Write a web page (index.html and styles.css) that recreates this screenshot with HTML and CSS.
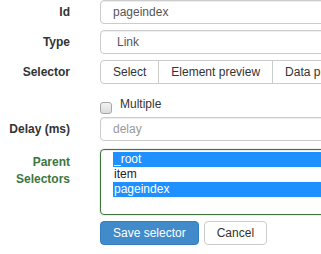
FILE: index.html
```html
<!DOCTYPE html>
<html>
<head>
    <meta name="viewport" content="width=device-width, initial-scale=1">
    <link rel="stylesheet" href="styles.css">
</head>
<body>
    <form class="selector-form">
        <div class="form-row">
            <label class="form-label" for="selectorId">Id</label>
            <input class="form-control" id="selectorId" type="text" value="pageindex">
        </div>
        <div class="form-row">
            <label class="form-label" for="selectorType">Type</label>
            <select class="form-control select-control" id="selectorType">
                <option>Link</option>
            </select>
        </div>
        <div class="form-row">
            <label class="form-label">Selector</label>
            <div class="btn-group">
                <button type="button" class="btn">Select</button>
                <button type="button" class="btn">Element preview</button>
                <button type="button" class="btn">Data preview</button>
            </div>
        </div>
        <div class="check-row">
            <span class="fake-checkbox"></span>
            <span class="check-text">Multiple</span>
        </div>
        <div class="form-row delay-row">
            <label class="form-label" for="delay">Delay (ms)</label>
            <input class="form-control" id="delay" type="text" placeholder="delay">
        </div>
        <div class="form-row parent-row">
            <label class="form-label success-label">Parent Selectors</label>
            <div class="listbox" role="listbox">
                <div class="list-option selected">_root</div>
                <div class="list-option">item</div>
                <div class="list-option selected">pageindex</div>
            </div>
        </div>
        <div class="action-row">
            <button type="button" class="btn btn-primary">Save selector</button>
            <button type="button" class="btn btn-cancel">Cancel</button>
        </div>
    </form>
</body>
</html>
```

FILE: styles.css
```css
body {
    margin: 0;
    font-family: "Liberation Sans", Arial, sans-serif;
    font-size: 12px;
    color: #333;
    background-color: #fff;
    overflow: hidden;
}

.selector-form {
    display: flex;
    flex-direction: column;
    gap: 6px;
    width: 420px;
}

.form-row {
    display: flex;
    align-items: center;
}

.form-label {
    flex: none;
    width: 70px;
    margin-right: 30px;
    text-align: right;
    font-weight: bold;
}

.success-label {
    align-self: flex-start;
    padding-top: 5px;
    line-height: 17px;
    color: #3c763d;
}

.form-control {
    width: 300px;
    height: 24px;
    box-sizing: border-box;
    margin: 0;
    padding: 0 12px;
    border: 1px solid #ccc;
    border-radius: 4px;
    font: inherit;
    color: #555;
    background-color: #fff;
    box-shadow: inset 0 1px 1px rgba(0, 0, 0, .075);
}

.form-control::placeholder {
    color: #999;
}

.select-control {
    -webkit-appearance: none;
    appearance: none;
    padding-left: 16px;
}

.btn-group {
    display: flex;
}

.btn {
    height: 24px;
    box-sizing: border-box;
    margin: 0;
    padding: 0 12px;
    border: 1px solid #ccc;
    background-color: #fff;
    font: inherit;
    color: #333;
    white-space: nowrap;
    cursor: pointer;
}

.btn-group .btn {
    border-radius: 0;
    margin-left: -1px;
}

.btn-group .btn:first-child {
    margin-left: 0;
    border-radius: 4px 0 0 4px;
}

.check-row {
    display: flex;
    align-items: flex-start;
    height: 21px;
    padding-left: 100px;
}

.fake-checkbox {
    width: 10px;
    height: 10px;
    margin-top: 12px;
    border: 1px solid #a6a6a6;
    border-radius: 3px;
    background: linear-gradient(#f2f2f2, #dcdcdc);
}

.check-text {
    margin-left: 8px;
    padding-top: 6px;
    line-height: 17px;
}

.delay-row {
    margin-bottom: 2px;
}

.listbox {
    width: 300px;
    height: 66px;
    box-sizing: border-box;
    padding: 2px 0 0 12px;
    border: 1px solid #3c763d;
    border-radius: 4px;
    box-shadow: inset 0 1px 1px rgba(0, 0, 0, .075), 0 0 2px rgba(60, 118, 61, .35);
}

.list-option {
    line-height: 15px;
    padding-left: 1px;
    color: #222;
}

.list-option.selected {
    background-color: #1e90ff;
    color: #fff;
}

.action-row {
    display: flex;
    gap: 5px;
    padding-left: 100px;
}

.btn-primary {
    border-color: #357ebd;
    border-radius: 4px;
    background-color: #428bca;
    color: #fff;
}

.btn-cancel {
    border-radius: 4px;
}
```
